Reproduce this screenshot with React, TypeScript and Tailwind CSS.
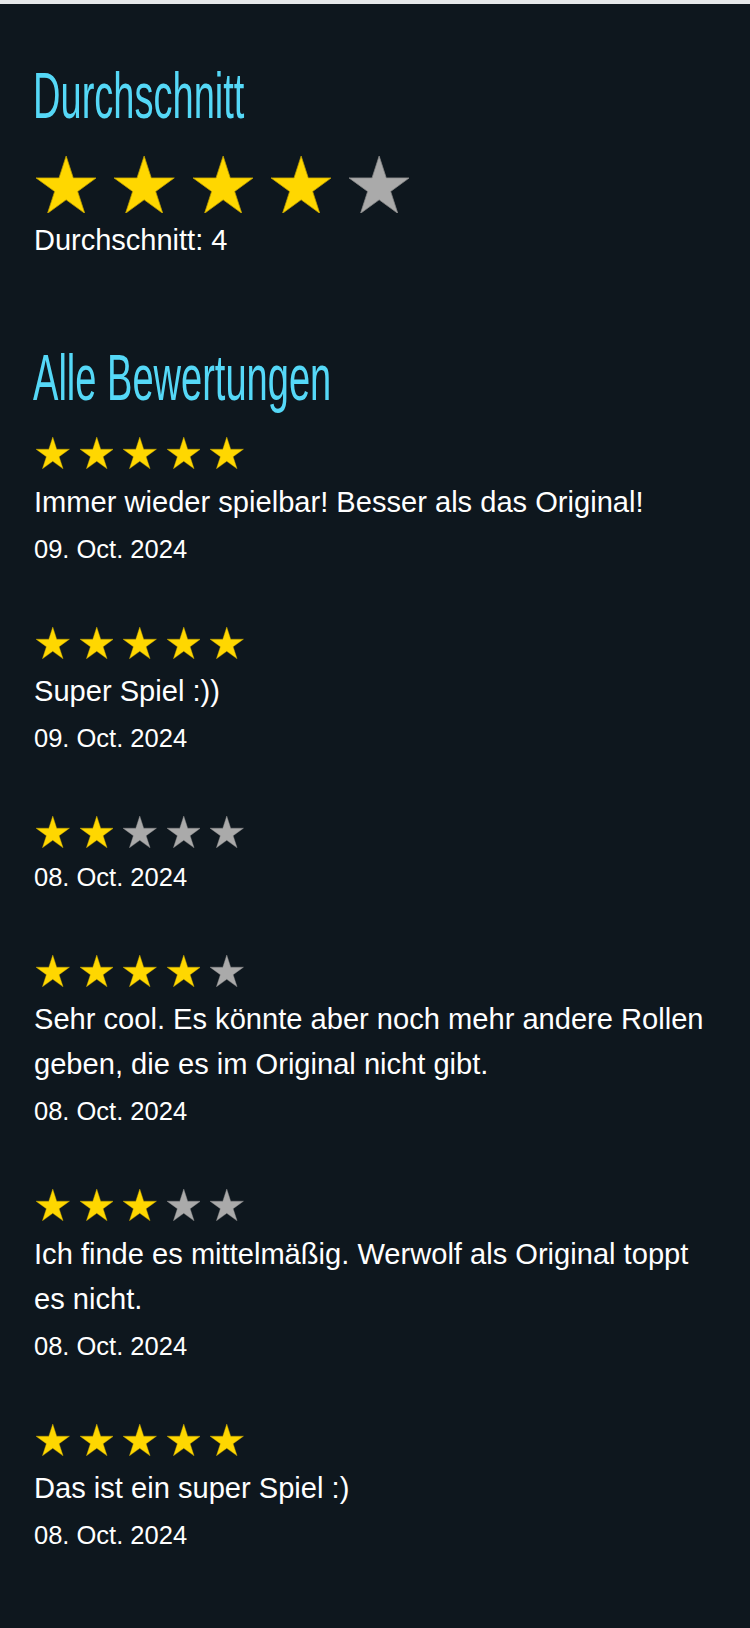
const GOLD = "#FFD700";
const GREY = "#AAAAAA";

type Review = { rating: number; text?: string; date: string };

const reviews: Review[] = [
  { rating: 5, text: "Immer wieder spielbar! Besser als das Original!", date: "09. Oct. 2024" },
  { rating: 5, text: "Super Spiel :))", date: "09. Oct. 2024" },
  { rating: 2, date: "08. Oct. 2024" },
  {
    rating: 4,
    text: "Sehr cool. Es könnte aber noch mehr andere Rollen geben, die es im Original nicht gibt.",
    date: "08. Oct. 2024",
  },
  {
    rating: 3,
    text: "Ich finde es mittelmäßig. Werwolf als Original toppt es nicht.",
    date: "08. Oct. 2024",
  },
  { rating: 5, text: "Das ist ein super Spiel :)", date: "08. Oct. 2024" },
];

// regular five-point star, outer radius 50
function starPoints() {
  const pts: string[] = [];
  for (let i = 0; i < 10; i++) {
    const a = -Math.PI / 2 + (i * Math.PI) / 5;
    const r = i % 2 === 0 ? 50 : 19.1;
    pts.push(`${(47.55 + r * Math.cos(a)).toFixed(2)},${(50 + r * Math.sin(a)).toFixed(2)}`);
  }
  return pts.join(" ");
}

const POINTS = starPoints();

function Star({ filled, width }: { filled: boolean; width: number }) {
  const height = (width * 90.45) / 95.1;
  return (
    <svg width={width} height={height} viewBox="0 0 95.1 90.45" aria-hidden="true">
      <polygon
        points={POINTS}
        fill={filled ? GOLD : GREY}
        stroke={filled ? "#BFA000" : "#8a8a8a"}
        strokeWidth="1.2"
        strokeLinejoin="miter"
      />
    </svg>
  );
}

function Stars({ rating, width, gap }: { rating: number; width: number; gap: string }) {
  return (
    <div className={`ml-[2px] flex ${gap}`}>
      {[1, 2, 3, 4, 5].map((n) => (
        <Star key={n} filled={n <= rating} width={width} />
      ))}
    </div>
  );
}

export default function App() {
  return (
    <div className="min-h-screen border-t-4 border-[#e6e8ea] bg-[#0e171e] px-[34px] pt-[59px] pb-[60px] font-['Liberation_Sans',Arial,sans-serif] text-white">
      <h2 className="-ml-[1px] origin-left scale-x-[0.58] text-[65.6px] leading-[66px] font-normal text-[#55d8f7] whitespace-nowrap">
        Durchschnitt
      </h2>
      <div className="mt-[27px] h-[57.3px]">
        <div className="ml-[2px] flex gap-[18px]">
          {[1, 2, 3, 4, 5].map((n) => (
            <Star key={n} filled={n <= 4} width={60.3} />
          ))}
        </div>
      </div>
      <p className="mt-[5px] text-[29px] leading-[45px]">Durchschnitt: 4</p>

      <h2 className="-ml-[1px] mt-[82px] origin-left scale-x-[0.58] text-[65.6px] leading-[66px] font-normal text-[#55d8f7] whitespace-nowrap">
        Alle Bewertungen
      </h2>

      <div className="mt-[26px] flex flex-col gap-[60px]">
        {reviews.map((r, i) => (
          <div key={i} className="flex flex-col">
            <div className="mb-[10.5px] h-[32px]">
              <Stars rating={r.rating} width={33.5} gap="gap-[10px]" />
            </div>
            {r.text && <p className="mb-[6px] text-[29.1px] leading-[45px]">{r.text}</p>}
            <p className="text-[25.5px] leading-[36px]">{r.date}</p>
          </div>
        ))}
      </div>
    </div>
  );
}
